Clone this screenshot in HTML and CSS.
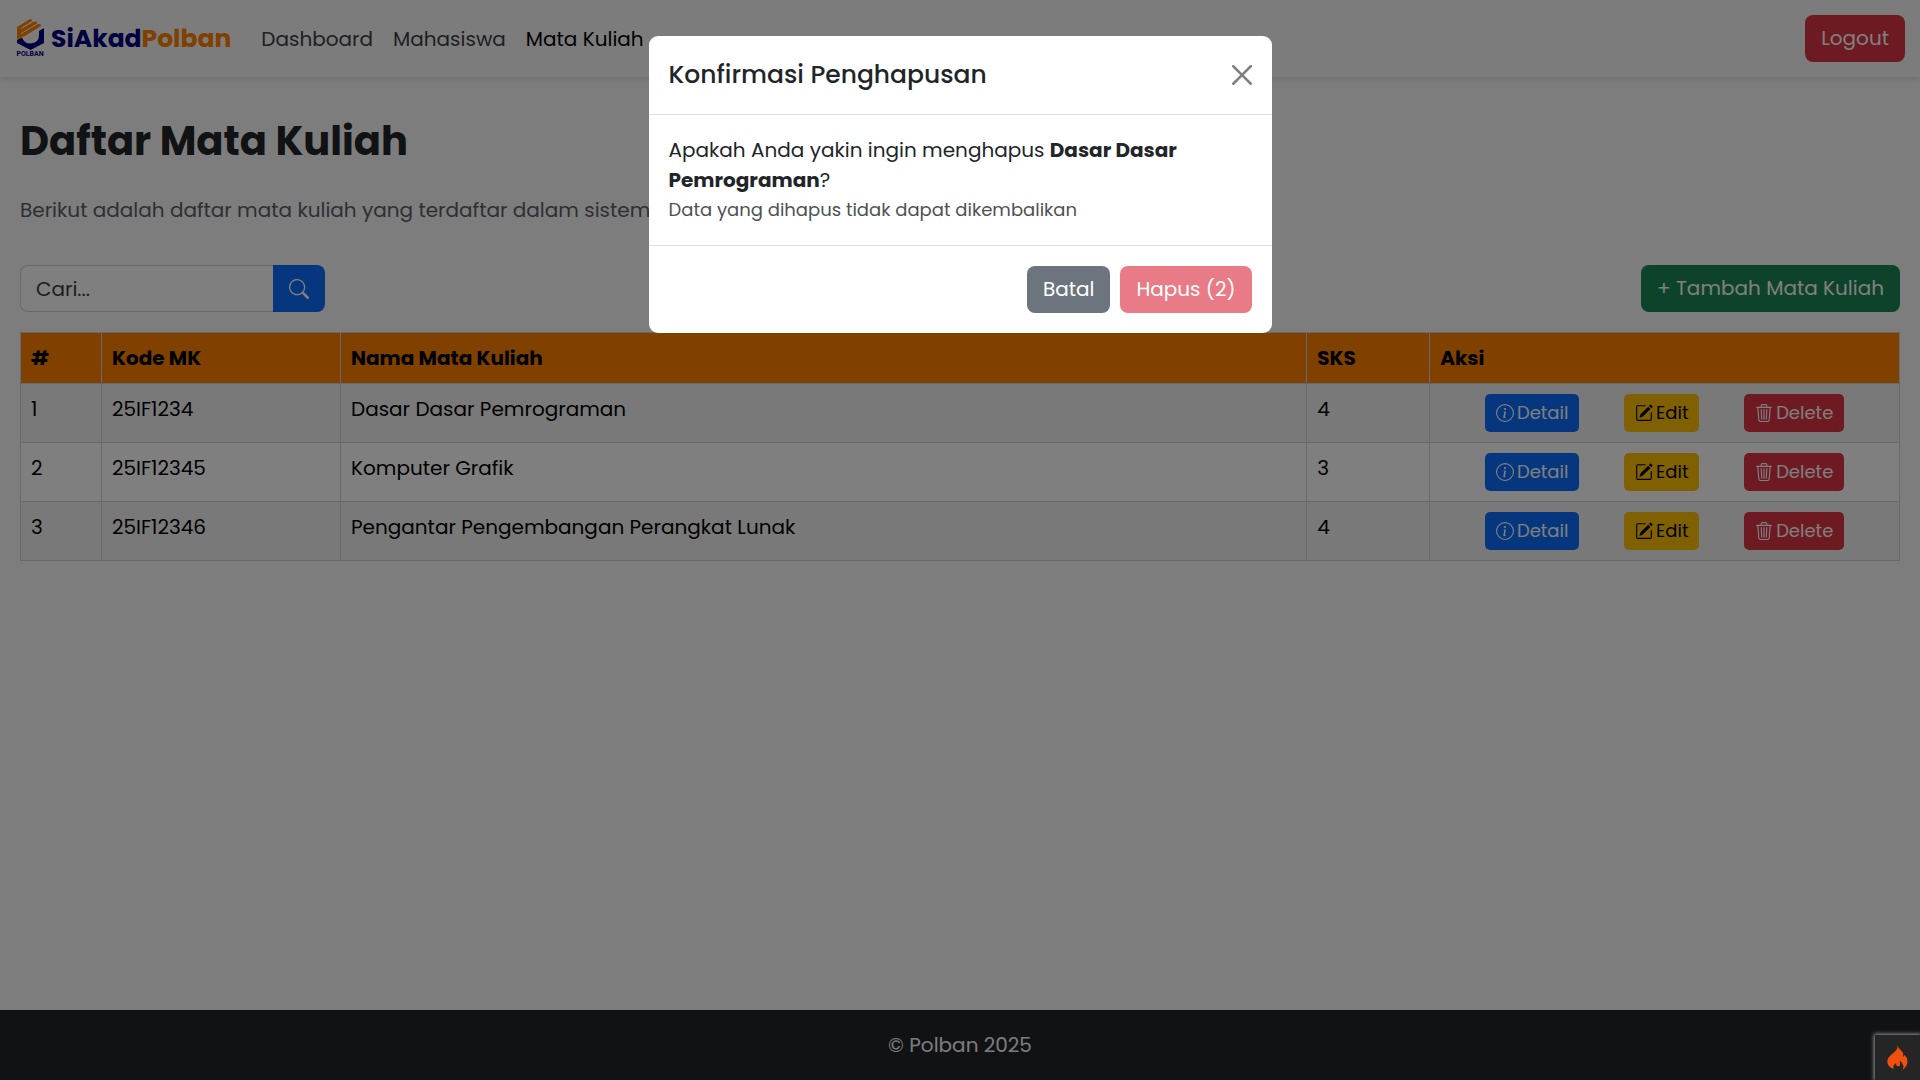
FILE: index.html
```html
<!DOCTYPE html>
<html lang="id">
<head>
<meta charset="utf-8">
<meta name="viewport" content="width=device-width, initial-scale=1">
<title>Daftar Mata Kuliah</title>
<link rel="stylesheet" href="styles.css">
</head>
<body>
<svg class="sprite" aria-hidden="true">
  <symbol id="info" viewBox="0 0 16 16"><path d="M8 15A7 7 0 1 1 8 1a7 7 0 0 1 0 14m0 1A8 8 0 1 0 8 0a8 8 0 0 0 0 16"/><path d="m8.93 6.588-2.29.287-.082.38.45.083c.294.07.352.176.288.469l-.738 3.468c-.194.897.105 1.319.808 1.319.545 0 1.178-.252 1.465-.598l.088-.416c-.2.176-.492.246-.686.246-.275 0-.375-.193-.304-.533zM9 4.5a1 1 0 1 1-2 0 1 1 0 0 1 2 0"/></symbol>
  <symbol id="pencil" viewBox="0 0 16 16"><path d="M15.502 1.94a.5.5 0 0 1 0 .706L14.459 3.69l-2-2L13.502.646a.5.5 0 0 1 .707 0l1.293 1.293zm-1.75 2.456-2-2L4.939 9.21a.5.5 0 0 0-.121.196l-.805 2.414a.25.25 0 0 0 .316.316l2.414-.805a.5.5 0 0 0 .196-.12l6.813-6.814z"/><path d="M1 13.5A1.5 1.5 0 0 0 2.5 15h11a1.5 1.5 0 0 0 1.5-1.5v-6a.5.5 0 0 0-1 0v6a.5.5 0 0 1-.5.5h-11a.5.5 0 0 1-.5-.5v-11a.5.5 0 0 1 .5-.5H9a.5.5 0 0 0 0-1H2.5A1.5 1.5 0 0 0 1 2.5z"/></symbol>
  <symbol id="trash" viewBox="0 0 16 16"><path d="M6.5 1h3a.5.5 0 0 1 .5.5v1H6v-1a.5.5 0 0 1 .5-.5M11 2.5v-1A1.5 1.5 0 0 0 9.5 0h-3A1.5 1.5 0 0 0 5 1.5v1H1.5a.5.5 0 0 0 0 1h.538l.853 10.66A2 2 0 0 0 4.885 16h6.23a2 2 0 0 0 1.994-1.84l.853-10.66h.538a.5.5 0 0 0 0-1zm1.958 1-.846 10.58a1 1 0 0 1-.997.92h-6.23a1 1 0 0 1-.997-.92L3.042 3.5zm-7.487 1a.5.5 0 0 1 .528.47l.5 8.5a.5.5 0 0 1-.998.06L5 5.03a.5.5 0 0 1 .47-.53Zm5.058 0a.5.5 0 0 1 .47.53l-.5 8.5a.5.5 0 1 1-.998-.06l.5-8.5a.5.5 0 0 1 .528-.47M8 4.5a.5.5 0 0 1 .5.5v8.5a.5.5 0 0 1-1 0V5a.5.5 0 0 1 .5-.5"/></symbol>
</svg>

<header class="navbar">
  <a class="brand" href="#">
    <span class="logo">
      <svg viewBox="0 0 27 31" width="27" height="31" aria-hidden="true">
        <path fill="#000080" d="M0 21 5 18.500Q7 24.500 13.500 24.500Q22 24 22 16V12L27 9V24L13.500 31 0 24Z"/>
        <path fill="#ff8000" d="M0 8 13 0Q15.500 .3 14.800 2.200L0 11.500ZM0 12.500 17 2.500Q20.500 2 20 4.500L0 16.500ZM0 17.500 21 5Q24.500 4.500 24 7L11 15Q6.500 18 6 17.500L0 20.500Z"/>
        <path fill="#ff8000" d="M0 8H4V19L0 20.500Z"/>
      </svg>
      <span class="logo-name">POLBAN</span>
    </span>
    <span class="brand-name">SiAkad<span class="brand-accent">Polban</span></span>
  </a>
  <nav class="nav">
    <a href="#">Dashboard</a>
    <a href="#">Mahasiswa</a>
    <a class="active" href="#">Mata Kuliah</a>
  </nav>
  <button class="btn btn-danger" type="button">Logout</button>
</header>

<main class="content">
  <h1>Daftar Mata Kuliah</h1>
  <p class="lead">Berikut adalah daftar mata kuliah yang terdaftar dalam sistem.</p>
  <div class="toolbar">
    <form class="search">
      <input type="search" placeholder="Cari..." aria-label="Cari mata kuliah">
      <button type="submit" aria-label="Cari">
        <svg viewBox="0 0 16 16" width="20" height="20" aria-hidden="true"><path d="M11.742 10.344a6.500 6.500 0 1 0-1.397 1.398h-.001q.044.06.098.115l3.850 3.850a1 1 0 0 0 1.415-1.414l-3.850-3.850a1 1 0 0 0-.115-.1zM12 6.500a5.500 5.500 0 1 1-11 0 5.500 5.500 0 0 1 11 0"/></svg>
      </button>
    </form>
    <button class="btn btn-success" type="button">+ Tambah Mata Kuliah</button>
  </div>
  <table class="courses">
    <colgroup><col class="c-num"><col class="c-code"><col><col class="c-sks"><col class="c-actions"></colgroup>
    <thead>
      <tr><th scope="col">#</th><th scope="col">Kode MK</th><th scope="col">Nama Mata Kuliah</th><th scope="col">SKS</th><th scope="col">Aksi</th></tr>
    </thead>
    <tbody>
      <tr>
        <td>1</td><td>25IF1234</td><td>Dasar Dasar Pemrograman</td><td>4</td>
        <td><div class="actions">
          <button class="btn-sm btn-primary" type="button"><svg class="icon"><use href="#info"/></svg>Detail</button>
          <button class="btn-sm btn-warning" type="button"><svg class="icon"><use href="#pencil"/></svg>Edit</button>
          <button class="btn-sm btn-danger" type="button"><svg class="icon"><use href="#trash"/></svg>Delete</button>
        </div></td>
      </tr>
      <tr>
        <td>2</td><td>25IF12345</td><td>Komputer Grafik</td><td>3</td>
        <td><div class="actions">
          <button class="btn-sm btn-primary" type="button"><svg class="icon"><use href="#info"/></svg>Detail</button>
          <button class="btn-sm btn-warning" type="button"><svg class="icon"><use href="#pencil"/></svg>Edit</button>
          <button class="btn-sm btn-danger" type="button"><svg class="icon"><use href="#trash"/></svg>Delete</button>
        </div></td>
      </tr>
      <tr>
        <td>3</td><td>25IF12346</td><td>Pengantar Pengembangan Perangkat Lunak</td><td>4</td>
        <td><div class="actions">
          <button class="btn-sm btn-primary" type="button"><svg class="icon"><use href="#info"/></svg>Detail</button>
          <button class="btn-sm btn-warning" type="button"><svg class="icon"><use href="#pencil"/></svg>Edit</button>
          <button class="btn-sm btn-danger" type="button"><svg class="icon"><use href="#trash"/></svg>Delete</button>
        </div></td>
      </tr>
    </tbody>
  </table>
</main>

<footer class="footer">© Polban 2025</footer>

<div class="backdrop">
  <section class="modal" role="dialog" aria-modal="true" aria-labelledby="modal-title">
    <div class="modal-header">
      <h2 id="modal-title">Konfirmasi Penghapusan</h2>
      <button class="close" type="button" aria-label="Tutup">
        <svg viewBox="0 0 16 16" width="20" height="20" aria-hidden="true"><path d="M.293.293a1 1 0 0 1 1.414 0L8 6.586 14.293.293a1 1 0 1 1 1.414 1.414L9.414 8l6.293 6.293a1 1 0 0 1-1.414 1.414L8 9.414l-6.293 6.293a1 1 0 0 1-1.414-1.414L6.586 8 .293 1.707a1 1 0 0 1 0-1.414z"/></svg>
      </button>
    </div>
    <div class="modal-body">
      <p>Apakah Anda yakin ingin menghapus <strong>Dasar Dasar Pemrograman</strong>?</p>
      <small>Data yang dihapus tidak dapat dikembalikan</small>
    </div>
    <div class="modal-footer">
      <button class="btn btn-secondary" type="button">Batal</button>
      <button class="btn btn-danger" type="button" disabled>Hapus (2)</button>
    </div>
  </section>
</div>

<button class="debug" type="button" aria-label="Debug toolbar">
  <svg viewBox="0 0 21 25" width="21" height="25" aria-hidden="true"><path d="M10.300 0C11.200 3 14.500 5.500 16 8c.5 1.200.2 2.600-.2 3.700 1-.2 1.600-1 1.700-2 2 2 3.400 4.700 2.900 8-.5 3.300-2.700 5.800-5.400 7.300 1.200-1.400 1.700-3 1.300-4.600-.5-1.900-2.100-2.600-2.400-4.700-.9.500-1.200 1.400-.8 2.700.4 1.500-.6 3-2 2.900-1.600 0-2.400-1.500-1.800-3.200-2.100.8-4 3.800-2.400 6C3 22.700.5 20.400.3 16.800.2 13.400 2.600 11.300 4.900 9.300 8 6.700 11.300 4.300 10.300 0Z"/></svg>
</button>
</body>
</html>
```
FILE: styles.css
```css
* { box-sizing: border-box; }

body {
  margin: 0;
  min-height: 100vh;
  display: flex;
  flex-direction: column;
  background: #fafafa;
  color: #212529;
  font: 20px/30px Poppins, Inter, sans-serif;
}

button, input { font: inherit; color: inherit; }
button { border: 0; cursor: pointer; }
h1, h2, p { margin: 0; }
svg { fill: currentColor; flex: none; }
.sprite { position: absolute; width: 0; height: 0; }

.btn {
  padding: 8px 16px;
  border-radius: 8px;
  line-height: 31px;
  color: #fff;
}
.btn-sm {
  display: flex;
  align-items: center;
  gap: 3px;
  padding: 4px 11px;
  border-radius: 5px;
  font-size: 18px;
  color: #fff;
}
.btn-primary { background: #0d6efd; }
.btn-success { background: #198754; }
.btn-secondary { background: #6c757d; }
.btn-danger { background: #dc3545; }
.btn-warning { background: #ffc107; color: #000; }
.btn:disabled { opacity: .65; }
.icon { width: 18px; height: 18px; }

.navbar {
  display: flex;
  align-items: center;
  padding: 15px;
  background: #f8f9fa;
  box-shadow: 0 2px 5px rgba(0, 0, 0, .1);
}
.brand {
  display: flex;
  align-items: center;
  gap: 6px;
  margin-right: 30px;
  text-decoration: none;
  color: #000080;
}
.logo {
  display: flex;
  flex-direction: column;
  align-items: center;
  width: 30px;
}
.logo-name { font: bold 7px/9px Roboto, sans-serif; }
.brand-name { font-size: 25px; font-weight: 700; }
.brand-accent { color: #ff8000; }
.nav { display: flex; flex: 1; gap: 20px; }
.nav a { color: #3c4043; text-decoration: none; }
.nav .active { color: #000; }

.content { flex: 1; padding: 34px 20px; }
.content h1 { font-size: 40px; line-height: 60px; font-weight: 700; }
.lead { margin: 24px 0 40px; color: #596169; }
.toolbar { display: flex; justify-content: space-between; margin-bottom: 20px; }
.search { display: flex; }
.search input {
  width: 253px;
  padding: 0 15px;
  border: 1px solid #ced4da;
  border-right: 0;
  border-radius: 8px 0 0 8px;
  background: #fff;
  outline: 0;
}
.search input::placeholder { color: #3c4043; opacity: 1; }
.search button {
  display: flex;
  align-items: center;
  padding: 0 16px;
  border-radius: 0 8px 8px 0;
  background: #0d6efd;
  color: #fff;
}

.courses {
  width: 100%;
  table-layout: fixed;
  border-collapse: collapse;
  color: #000;
}
.c-num { width: 81px; }
.c-code { width: 239px; }
.c-sks { width: 123px; }
.c-actions { width: 25%; }
.courses th, .courses td {
  padding: 10px;
  border: 1px solid #ced4da;
  text-align: left;
  vertical-align: top;
}
.courses th { background: #ff8000; font-weight: 700; }
.courses td { background: #fff; }
.courses tbody tr:nth-child(odd) td { background: #f2f2f2; }
.actions { display: flex; justify-content: space-evenly; }

.footer {
  padding: 20px;
  background: #212529;
  color: #f8f9fa;
  text-align: center;
}

.backdrop {
  position: fixed;
  inset: 0;
  padding: 36px 20px;
  background: rgba(0, 0, 0, .5);
}
.modal {
  max-width: 623px;
  margin: 0 auto;
  border-radius: 9px;
  background: #fff;
}
.modal-header {
  display: flex;
  align-items: center;
  justify-content: space-between;
  padding: 20px;
  border-bottom: 1px solid #dee2e6;
}
.modal-header h2 { font-size: 25px; line-height: 38px; font-weight: 500; }
.close { display: flex; padding: 0; background: none; color: #000; opacity: .5; }
.modal-body { padding: 20px; border-bottom: 1px solid #dee2e6; }
.modal-body small { display: block; font-size: 18px; color: #4d5154; }
.modal-footer { display: flex; justify-content: flex-end; gap: 10px; padding: 20px; }

.debug {
  display: flex;
  position: fixed;
  right: 0;
  bottom: 0;
  padding: 10px 12px;
  background: #252525;
  color: #f0500f;
  box-shadow: 0 0 4px 1px #999;
}
```
